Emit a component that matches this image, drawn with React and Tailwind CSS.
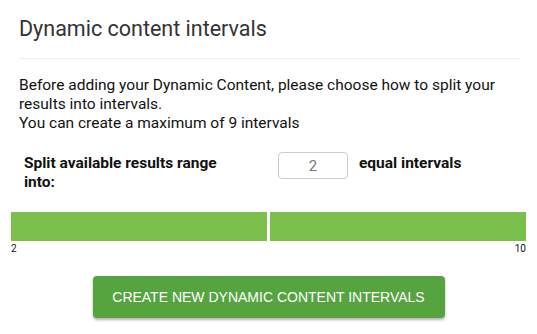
const App = () => {
  const intervals = 2;
  return (
    <div className="w-[537px] h-[334px] bg-white font-['Roboto',sans-serif] text-[#222] overflow-hidden">
      <div className="px-[19px] pt-[14px]">
        <h2 className="text-[21.5px] leading-[30px] text-[#333] font-normal">Dynamic content intervals</h2>
        <div className="mt-[14px] border-t border-[#eeeeee] w-[502px]" />
        <p className="mt-[17px] text-[15.5px] leading-[19px] text-[#111]">
          Before adding your Dynamic Content, please choose how to split your results into intervals.
          <br />
          You can create a maximum of 9 intervals
        </p>
      </div>

      <div className="flex items-start mt-[19px] pl-[24px]">
        <div className="w-[254px] pr-[34px] text-[15.5px] leading-[19px] font-bold text-[#111] pt-[2px]">
          Split available results range into:
        </div>
        <input
          readOnly
          value={intervals}
          className="w-[70px] h-[27px] border border-[#cccccc] rounded-[4px] text-center text-[15px] text-[#777] outline-none"
        />
        <div className="ml-[11px] text-[15.5px] leading-[19px] font-bold text-[#111] pt-[2px]">equal intervals</div>
      </div>

      <div className="mt-[20px] px-[11px]">
        <div className="flex gap-[3px] h-[29px]">
          <div className="flex-1 bg-[#7bc04d]" />
          <div className="flex-1 bg-[#7bc04d]" />
        </div>
        <div className="flex justify-between text-[10px] leading-[12px] text-[#111] mt-[2px]">
          <span>2</span>
          <span>10</span>
        </div>
      </div>

      <div className="flex justify-center mt-[21px]">
        <button className="w-[352px] h-[42px] bg-[#55a43f] rounded-[4px] text-white text-[14px] uppercase shadow-[0_2px_3px_rgba(0,0,0,0.3)] font-['Liberation_Sans',sans-serif]">
          Create new dynamic content intervals
        </button>
      </div>
    </div>
  );
};

export default App;
